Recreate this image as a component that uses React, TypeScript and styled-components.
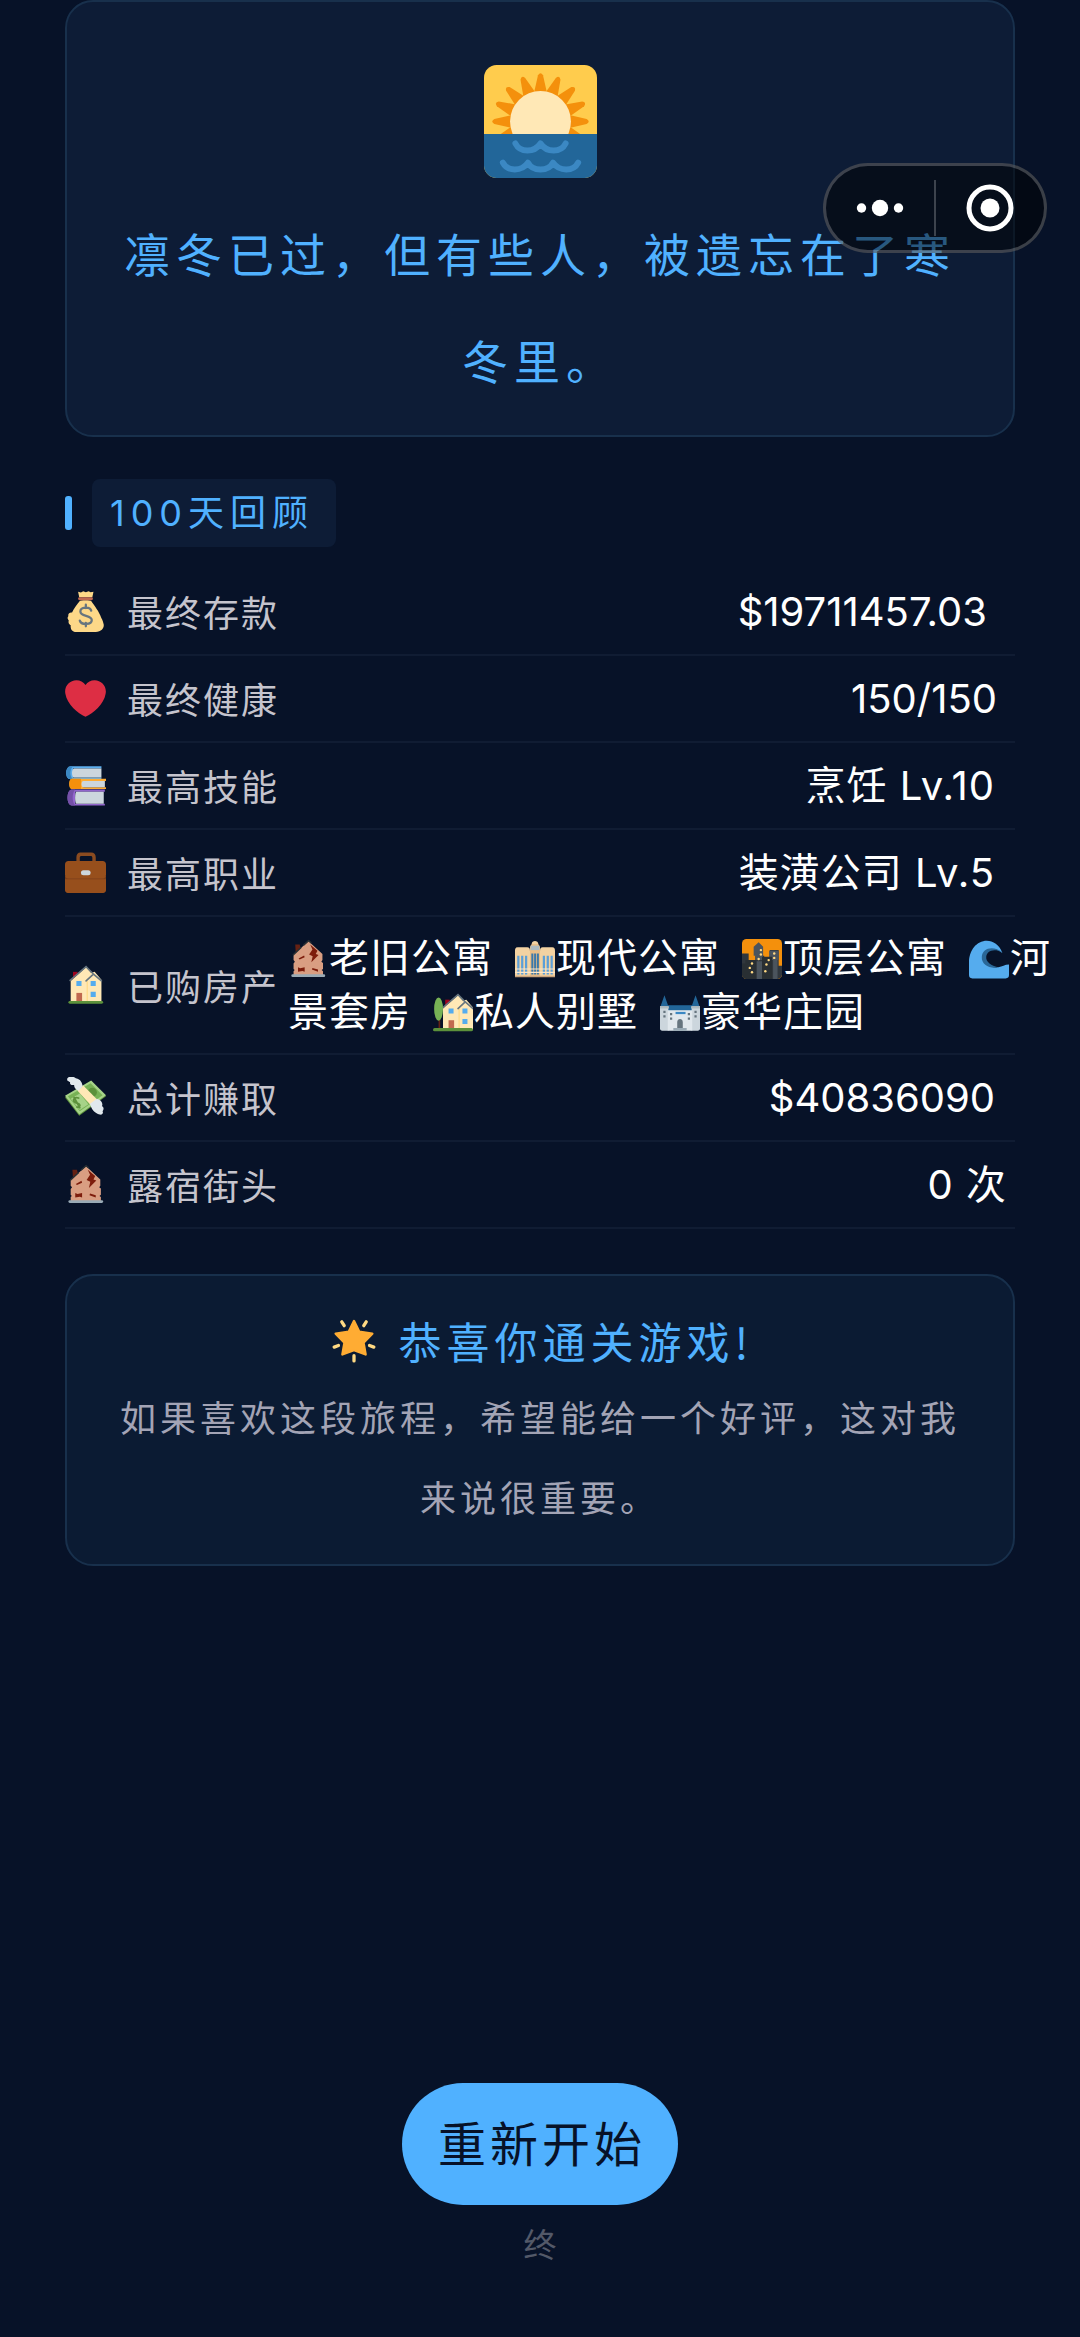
import type { ReactNode } from 'react';
import styled, { createGlobalStyle } from 'styled-components';

const GlobalStyle = createGlobalStyle`
  :root {
    --color-page: #071228;
    --color-card: #0d1c36;
    --color-card-soft: #0b1b33;
    --color-line: #18304c;
    --color-row-line: #101c33;
    --color-accent: #50b1ff;
    --color-label: #c5c4cd;
    --color-muted: #a3a4b5;
    --color-faint: #535968;
  }

  * {
    box-sizing: border-box;
    margin: 0;
    padding: 0;
  }

  body {
    background-color: var(--color-page);
    font-family: 'Noto Sans CJK SC', sans-serif;
  }

  button {
    font-family: inherit;
    border: none;
    background: none;
    cursor: pointer;
  }
`;

const Page = styled.main`
  position: relative;
  display: flex;
  flex-direction: column;
  min-height: 100vh;
  padding: 0 65px 70px;
`;

const Card = styled.section<{ $soft?: boolean }>`
  display: flex;
  flex-direction: column;
  align-items: center;
  padding: ${({ $soft }) => ($soft ? '29px 40px 28px' : '63px 40px 22px')};
  border: 2px solid var(--color-line);
  border-radius: 28px;
  background-color: ${({ $soft }) => ($soft ? 'var(--color-card-soft)' : 'var(--color-card)')};
  text-align: center;
`;

const Icon = styled.svg<{ $size: number }>`
  flex: none;
  width: ${({ $size }) => $size}px;
  height: ${({ $size }) => $size}px;
`;

const Headline = styled.h1`
  margin-top: 21px;
  color: var(--color-accent);
  font-size: 46px;
  font-weight: 400;
  line-height: 107px;
  letter-spacing: 6px;
`;

const SectionHeader = styled.header`
  display: flex;
  align-items: center;
  gap: 20px;
  margin: 42px 0 22px;

  &::before {
    content: '';
    width: 7px;
    height: 34px;
    border-radius: 3px;
    background-color: var(--color-accent);
  }
`;

const SectionTitle = styled.h2`
  padding: 0 22px 0 18px;
  border-radius: 8px;
  background-color: var(--color-card);
  color: var(--color-accent);
  font-family: Inter, 'Noto Sans CJK SC', sans-serif;
  font-size: 36px;
  font-weight: 400;
  line-height: 68px;
  letter-spacing: 6px;
`;

const StatList = styled.dl`
  display: flex;
  flex-direction: column;
  margin-bottom: 45px;
`;

const StatRow = styled.div`
  display: flex;
  align-items: center;
  gap: 9px;
  padding: 14px 0;
  border-bottom: 2px solid var(--color-row-line);
`;

const StatLabel = styled.dt`
  display: flex;
  align-items: center;
  flex: none;
  gap: 21px;
  color: var(--color-label);
  font-size: 36px;
  line-height: 57px;
  letter-spacing: 2px;
`;

const StatValue = styled.dd<{ $inset: number; $numeric?: boolean }>`
  margin-left: auto;
  margin-right: ${({ $inset }) => $inset}px;
  color: #fff;
  font-family: Inter, 'Noto Sans CJK SC', sans-serif;
  font-size: 40px;
  line-height: 54px;
  letter-spacing: ${({ $numeric }) => ($numeric ? 0 : '1px')};
`;

const Estate = styled.span`
  margin-right: 22px;

  & > svg {
    margin-right: 1px;
    vertical-align: -7px;
  }
`;

const PraiseTitle = styled.h2`
  display: flex;
  align-items: center;
  gap: 23px;
  padding-left: 5px;
  color: var(--color-accent);
  font-size: 43px;
  font-weight: 400;
  line-height: 71px;
  letter-spacing: 5px;
`;

const PraiseText = styled.p`
  color: var(--color-muted);
  font-size: 36px;
  line-height: 80px;
  letter-spacing: 4px;
`;

const Footer = styled.footer`
  display: flex;
  flex-direction: column;
  align-items: center;
  gap: 14px;
  margin-top: auto;
  padding-top: 80px;
`;

const RestartButton = styled.button`
  padding: 0 32px 6px 36px;
  border-radius: 61px;
  background-color: var(--color-accent);
  color: var(--color-page);
  font-size: 48px;
  line-height: 116px;
  letter-spacing: 4px;
`;

const EndMark = styled.p`
  color: var(--color-faint);
  font-size: 33px;
  line-height: 48px;
`;

const Capsule = styled.nav`
  position: absolute;
  top: 163px;
  right: 33px;
  display: flex;
  align-items: center;
  width: 224px;
  height: 90px;
  border: 3px solid rgba(255, 255, 255, 0.22);
  border-radius: 45px;
  background-color: rgba(0, 0, 0, 0.5);
`;

const CapsuleButton = styled.button`
  display: flex;
  flex: 1;
  align-items: center;
  justify-content: center;
  height: 100%;

  & + & {
    border-left: 2px solid transparent;
    border-image: linear-gradient(
        transparent 14px,
        rgba(255, 255, 255, 0.22) 14px,
        rgba(255, 255, 255, 0.22) 70px,
        transparent 70px
      )
      0 0 0 2;
  }
`;

type IconProps = { size?: number };

const EmojiSvg = ({ size = 41, children }: IconProps & { children: ReactNode }) => (
  <Icon $size={size} viewBox="0 0 36 36" aria-hidden="true">
    {children}
  </Icon>
);

const rayAngles = [-112.5, -90, -67.5, -45, -22.5, 0, 22.5, 45, 67.5, 90, 112.5];

const SunriseIcon = ({ size }: IconProps) => (
  <EmojiSvg size={size}>
    <path fill="#FFCC4D" d="M36 32c0 2.200-1.800 4-4 4H4c-2.200 0-4-1.800-4-4V4c0-2.200 1.800-4 4-4h28c2.200 0 4 1.800 4 4v28z" />
    {rayAngles.map((angle) => (
      <path
        key={angle}
        fill="#F4900C"
        transform={`rotate(${angle} 18 18)`}
        d="M15.800 9.500L17.200 3.300Q18 2 18.800 3.300L20.200 9.500z"
      />
    ))}
    <circle fill="#FFE8B6" cx="18" cy="18" r="9.700" />
    <path fill="#226699" d="M0 22h36v10c0 2.200-1.800 4-4 4H4c-2.200 0-4-1.800-4-4z" />
    <g fill="none" stroke="#3B88C3" strokeWidth="1.900" strokeLinecap="round" strokeLinejoin="round">
      <path d="M10 25C11.500 28 16 28 18 25C20 28 24.500 28 26 25" />
      <path d="M6 31.100C7.500 34 12 34 14 31.100C15.500 34 20.500 34 22 31.100C24 34 28.500 34 30 31.100" />
    </g>
  </EmojiSvg>
);

const MoneyBagIcon = () => (
  <EmojiSvg>
    <path
      fill="#FDD888"
      d="M31.900 23.700C30 18 25.500 12.500 23 8.800C22.500 8 13.500 8 13 8.800C10.500 12 7.500 16 6.200 18.800C4 18.700 2.400 20 3 22C1.600 23.500 2.500 25 3.300 26C2.500 28 3.800 29.500 5 30C4.500 34 7 36 10 36H27C31.500 36 34.500 33 34 29.500C33.600 27.500 33 25.500 31.900 23.700z"
    />
    <path fill="#FDD888" d="M12.500 5.500L11.500.7L14 1.300L16 .3L18.300 1.200L20.700.3L22.500 1.200L25 .7L24 5.500z" />
    <rect fill="#BF6952" x="11.500" y="5.400" width="13" height="2.700" rx="1.200" />
    <path
      fill="none"
      stroke="#67757F"
      strokeWidth="2"
      strokeLinecap="round"
      d="M23 17.200C22 13.500 13.500 13.700 13.500 18C13.500 23 23.500 20.500 23.500 25.500C23.500 30 14 30 13 26M18.300 12v3M18.300 28v3"
    />
  </EmojiSvg>
);

const HeartIcon = () => (
  <EmojiSvg>
    <path
      fill="#DD2E44"
      d="M35.885 11.833c0-5.450-4.418-9.868-9.867-9.868-3.308 0-6.227 1.633-8.018 4.129-1.791-2.496-4.710-4.129-8.017-4.129-5.450 0-9.868 4.417-9.868 9.868 0 .772.098 1.520.266 2.241C1.751 22.587 11.216 31.568 18 34.034c6.783-2.466 16.249-11.447 17.617-19.959.170-.721.268-1.469.268-2.242z"
    />
  </EmojiSvg>
);

const BooksIcon = () => (
  <EmojiSvg>
    <path fill="#5DADEC" d="M5 1h27v2H7v8h25v1.500H5C2 12.500 1 9.500 1 6.800S2.500 1 5 1z" />
    <path fill="#3B88C3" d="M5 1C2.500 1 1 4 1 6.800s1 5.700 4 5.700h2C4 10 4 4 7 1z" />
    <path fill="#CCD6DD" d="M8 3h24v8H8C5.500 11 5.500 3 8 3z" />
    <path fill="#FFAC33" d="M6 12h30v2H16v5.500h20V21H6C3 21 3 12 6 12z" />
    <path fill="#F4900C" d="M6 12h8v9H6C3 21 3 12 6 12z" />
    <path fill="#CCD6DD" d="M16 14h19v5.500H16C14 19.500 14 14 16 14z" />
    <path fill="#9266CC" d="M6 21.500h29v2H9v10.500h26v1.500H6C1 35.500 1 21.500 6 21.500z" />
    <path fill="#7450A8" d="M6 21.500h3c-3 3-3 11 0 14H6C1 35.500 1 21.500 6 21.500z" />
    <path fill="#CCD6DD" d="M10 23.500h24V34H10C8.500 34 8.500 23.500 10 23.500z" />
  </EmojiSvg>
);

const BriefcaseIcon = () => (
  <EmojiSvg>
    <path
      fill="#8A4B20"
      d="M27 8V4.500C27 2 25.500.5 23 .5H13.500C11.500.5 10 2 10 4.500V8h3V5c0-1 .5-1.500 1.500-1.500h8C23.500 3.500 24 4 24 5v3z"
    />
    <path fill="#7B3F1A" d="M0 21h36v12c0 1.800-1.200 3-3 3H3c-1.800 0-3-1.200-3-3z" />
    <path fill="#974F1C" d="M0 24h36v9c0 1.800-1.200 3-3 3H3c-1.800 0-3-1.200-3-3z" />
    <path fill="#974F1C" d="M3 8h30c1.800 0 3 1.200 3 3v9c0 2-1.200 3.300-3 3.300H3C1.200 23.300 0 22 0 20v-9c0-1.800 1.200-3 3-3z" />
    <rect fill="#CCD6DD" x="14" y="16" width="8.500" height="4.500" rx="2.200" />
  </EmojiSvg>
);

const House = () => (
  <>
    <path fill="#A0041E" d="M7 6h4v7H7z" />
    <path fill="#FFE8B6" d="M5 14L18.500 2L23 7l3-1l6 7v20H5z" />
    <path fill="#FFD983" d="M19 14v19h1V14z" />
    <path fill="none" stroke="#66757F" strokeWidth="1.400" strokeLinecap="round" d="M4.500 13.500L18.500 1.500L24.500 7.500M18.500 14L25 8L32 14" />
    <path fill="#55ACEE" d="M10 14h4.500v4.500H10zM22.500 14H27v4.500h-4.500zM22.500 23.500H27V28h-4.500z" />
    <path fill="#C1694F" d="M10 24.500h5V33h-5z" />
  </>
);

const HouseIcon = () => (
  <EmojiSvg>
    <House />
    <rect fill="#5C913B" x="3" y="31.500" width="30.500" height="2.500" rx="1.200" />
  </EmojiSvg>
);

const GardenHouseIcon = () => (
  <EmojiSvg size={40}>
    <g transform="translate(4 0)">
      <House />
    </g>
    <path fill="#662113" d="M5 22h1.500v11H5z" />
    <ellipse fill="#77B255" cx="5" cy="14.500" rx="4" ry="10.500" />
    <rect fill="#5C913B" x="0" y="31.500" width="36" height="3" rx="1.500" />
  </EmojiSvg>
);

const DerelictIcon = ({ size }: IconProps) => (
  <EmojiSvg size={size}>
    <path fill="#662113" d="M6.500 5h4l1 4l-3.500 4H7z" />
    <path fill="#D99E82" d="M5 14L18.500 2L31 13.500V19l-1 1.500l1.500 1V27l-1.200 1l1.200 1v4H5v-4l1-1l-1-1v-5l1.200-1.500L5 19z" />
    <path fill="none" stroke="#292F33" strokeWidth="1.300" d="M4.500 14.500L12 7.500M14 5.500L18.500 1.500L21 3.500" />
    <path fill="#7D1D0C" d="M20 5l6.500 5.500l-1.500 3l2.500 1L21 21l1.200-5.500l-3.200-1.500L22 9.500z" />
    <path fill="#7D1D0C" d="M9.500 17.500L14.500 14.800L15 16.500L10.500 18.500zM9 25.500l2 .8l4-.8v4l-2-.7l-4 .7zM22 26l5 1.500v2L21.500 27.500z" />
    <rect fill="#99AAB5" x="3" y="31.800" width="30.500" height="2.400" rx="1.200" />
  </EmojiSvg>
);

const ApartmentIcon = () => (
  <EmojiSvg size={40}>
    <path fill="#F3D2A2" d="M15 4.500C15 1 21 1 21 4.500zM0 11c0-3 1-3.500 3-3.500h8c2 0 2.500 1 2.500 3.500V34H0zM22.500 11c0-2.500.5-3.500 2.500-3.500h8c2 0 3 .5 3 3.500V34H22.500z" />
    <path fill="#E9BE88" d="M13.500 7L15 4.500h6L22.500 7V34h-9z" />
    <path
      fill="#5C9FD8"
      d="M2 15h2v17H2zM5.500 15h2v17h-2zM9 15h2v17H9zM25 15h2v17h-2zM28.500 15h2v17h-2zM32 15h2v17h-2z"
    />
    <path fill="#3B78AA" d="M14.700 13h1.800v19h-1.800zM17.200 13H19v19h-1.800zM19.700 13h1.800v19h-1.800z" />
    <path stroke="#F9E7CC" strokeWidth="1" d="M0 27h36M0 30h36" />
    <path fill="#AEBBC1" d="M14 6h8v4h-8z" />
    <path fill="#CBA37A" d="M0 33h36v1.500H0z" />
  </EmojiSvg>
);

const cityLights = [
  [17, 10], [17, 14], [29, 13], [29, 17], [15, 18], [24, 19],
  [9, 22], [22, 23], [7, 26], [9, 30], [21, 29],
];

const CityIcon = () => (
  <EmojiSvg size={40}>
    <rect fill="#F4900C" width="36" height="36" rx="4" />
    <path fill="#31373D" d="M0 13h6v6h6V15h8v4h5v-9h8v14h3v8c0 2.200-1.800 4-4 4H4c-2.200 0-4-1.800-4-4z" />
    <path fill="#4B545D" d="M10.500 7L15 3l4 4v12h-7v-4h-1.500zM24.500 10.500H33V19h-8.500z" />
    <path fill="#4B545D" d="M13 20h5v16h-5zM28 19h4v17h-4z" />
    <path fill="#292F33" d="M3 19h10v17H4c-2.200 0-4-1.800-4-4V22h3zM18 16h9v20h-9z" />
    {cityLights.map(([x, y]) => (
      <circle key={`${x}-${y}`} fill="#FFD983" cx={x} cy={y} r="1.100" />
    ))}
  </EmojiSvg>
);

const WaveIcon = () => (
  <EmojiSvg size={40}>
    <path
      fill="#55ACEE"
      d="M30 12.500C27.500 5 21.500 1.500 16 1.500C7 1.500 0 10 0 21v11.500C0 34.500 1 35.500 3 35.500H33c2 0 3-1 3-3V23c-4 0-6 2-9.500 2.500C19 26.500 13 22 13.500 16C14 9.500 22 6.500 30 12.500z"
    />
    <path
      fill="#2A6797"
      d="M30 12C22 5.500 12 8 11.500 16C11 23 18.500 27 26 25.500C20.500 24 15 21 15.500 16C16 11 22 8 30 12z"
    />
  </EmojiSvg>
);

const CastleIcon = () => (
  <EmojiSvg size={40}>
    <path fill="#226699" d="M4 2L7.500 12H.5zM32 2L35.500 12H28.500z" />
    <path fill="#226699" d="M7 11h22v6H7z" />
    <path fill="#CCD6DD" d="M0 12h7.500v22H2c-1.200 0-2-.8-2-2zM28.500 12H36v20c0 1.200-.8 2-2 2h-5.500z" />
    <path fill="#E1E8ED" d="M7 15.500h22V34H7z" />
    <path fill="#AEBBC1" d="M0 12h8v2H0zM28 12h8v2h-8z" />
    <path fill="#3B88C3" d="M14 17h9v2h-9z" />
    <path fill="#66757F" d="M3 16h2v2H3zM3 20h2v2H3zM31 16h2v2h-2zM31 20h2v2h-2zM9 18h2v2H9zM9 22h2v2H9zM25 18h2v2h-2zM25 22h2v2h-2z" />
    <path fill="#66757F" d="M15.500 32v-6c0-3.500 5-3.500 5 0v6z" />
    <path fill="#99AAB5" d="M12 31.500h12V34H12z" />
  </EmojiSvg>
);

const WingedMoneyIcon = () => (
  <EmojiSvg>
    <path fill="#5C913B" d="M0 18L23 3.500L36 17L12.500 34z" />
    <path fill="#A6D388" d="M0 16.500L23 3L36 16L12.500 33z" />
    <path fill="#77B255" d="M2.500 17L22.500 5.500L33 16L13 30z" />
    <path fill="#A6D388" d="M5 19L13 14.500L20.500 24L13 29z" />
    <circle fill="#5C913B" cx="24" cy="13.500" r="4" />
    <path fill="none" stroke="#5C913B" strokeWidth="1.500" strokeLinecap="round" d="M12 18.500C8 17 6 20.500 9 22.500C13 23 15 26 10.500 26.500M8 18l5 9" />
    <path fill="#FFE8B6" d="M11 12L16 7.500L28 19.500L22.500 24.500z" />
    <path
      fill="#E1E8ED"
      d="M2 3C1-1 7-1 9.500 1C14 2 15 5 15.500 8L12 12C9.500 11 8 9.500 8 7C5 7.500 4 6 4.500 4.500zM28 19C32 20 33.500 23 32.500 25.500C34.500 27 34 29 33 30C34 32 32.500 33.500 30.500 33C26 32 23 28 22 23.500z"
    />
  </EmojiSvg>
);

const GlowingStarIcon = () => (
  <EmojiSvg size={44}>
    <path
      fill="#FFAC33"
      stroke="#FFAC33"
      strokeWidth="2"
      strokeLinejoin="round"
      d="M18 1.700L22.300 10.500L33 12L25.800 19.300L27.500 29L18 25.500L8.500 29L10.200 19.300L3 12L13.700 10.500z"
    />
    <path
      fill="none"
      stroke="#FFD983"
      strokeWidth="2.700"
      strokeLinecap="round"
      d="M8 2.300l2 3.200M28 2.300l-2 3.200M1.800 23l3.500-1.300M34.200 23l-3.500-1.300M18 30v4.300"
    />
  </EmojiSvg>
);

const estates = [
  { name: '老旧公寓', icon: <DerelictIcon size={40} /> },
  { name: '现代公寓', icon: <ApartmentIcon /> },
  { name: '顶层公寓', icon: <CityIcon /> },
  { name: '河景套房', icon: <WaveIcon /> },
  { name: '私人别墅', icon: <GardenHouseIcon /> },
  { name: '豪华庄园', icon: <CastleIcon /> },
];

const stats = [
  { label: '最终存款', icon: <MoneyBagIcon />, value: '$19711457.03', inset: 28, numeric: true },
  { label: '最终健康', icon: <HeartIcon />, value: '150/150', inset: 18, numeric: true },
  { label: '最高技能', icon: <BooksIcon />, value: '烹饪 Lv.10', inset: 20 },
  { label: '最高职业', icon: <BriefcaseIcon />, value: '装潢公司 Lv.5', inset: 20 },
  {
    label: '已购房产',
    icon: <HouseIcon />,
    value: estates.map(({ name, icon }) => (
      <Estate key={name}>
        {icon}
        {name}
      </Estate>
    )),
    inset: -44,
  },
  { label: '总计赚取', icon: <WingedMoneyIcon />, value: '$40836090', inset: 20, numeric: true },
  { label: '露宿街头', icon: <DerelictIcon />, value: '0 次', inset: 8 },
];

export default function App() {
  return (
    <>
      <GlobalStyle />
      <Page>
        <Card>
          <SunriseIcon size={113} />
          <Headline>凛冬已过，但有些人，被遗忘在了寒冬里。</Headline>
        </Card>

        <SectionHeader>
          <SectionTitle>100天回顾</SectionTitle>
        </SectionHeader>

        <StatList>
          {stats.map(({ label, icon, value, inset, numeric }) => (
            <StatRow key={label}>
              <StatLabel>
                {icon}
                {label}
              </StatLabel>
              <StatValue $inset={inset} $numeric={numeric}>
                {value}
              </StatValue>
            </StatRow>
          ))}
        </StatList>

        <Card $soft>
          <PraiseTitle>
            <GlowingStarIcon />
            恭喜你通关游戏!
          </PraiseTitle>
          <PraiseText>如果喜欢这段旅程，希望能给一个好评，这对我来说很重要。</PraiseText>
        </Card>

        <Footer>
          <RestartButton type="button">重新开始</RestartButton>
          <EndMark>终</EndMark>
        </Footer>

        <Capsule>
          <CapsuleButton type="button" aria-label="更多">
            <svg width="48" height="18" viewBox="0 0 48 18" fill="#fff">
              <circle cx="5.500" cy="9" r="4.700" />
              <circle cx="24" cy="9" r="8.200" />
              <circle cx="42.500" cy="9" r="4.700" />
            </svg>
          </CapsuleButton>
          <CapsuleButton type="button" aria-label="关闭">
            <svg width="48" height="48" viewBox="0 0 48 48">
              <circle cx="24" cy="24" r="21" fill="none" stroke="#fff" strokeWidth="5" />
              <circle cx="24" cy="24" r="9.500" fill="#fff" />
            </svg>
          </CapsuleButton>
        </Capsule>
      </Page>
    </>
  );
}
